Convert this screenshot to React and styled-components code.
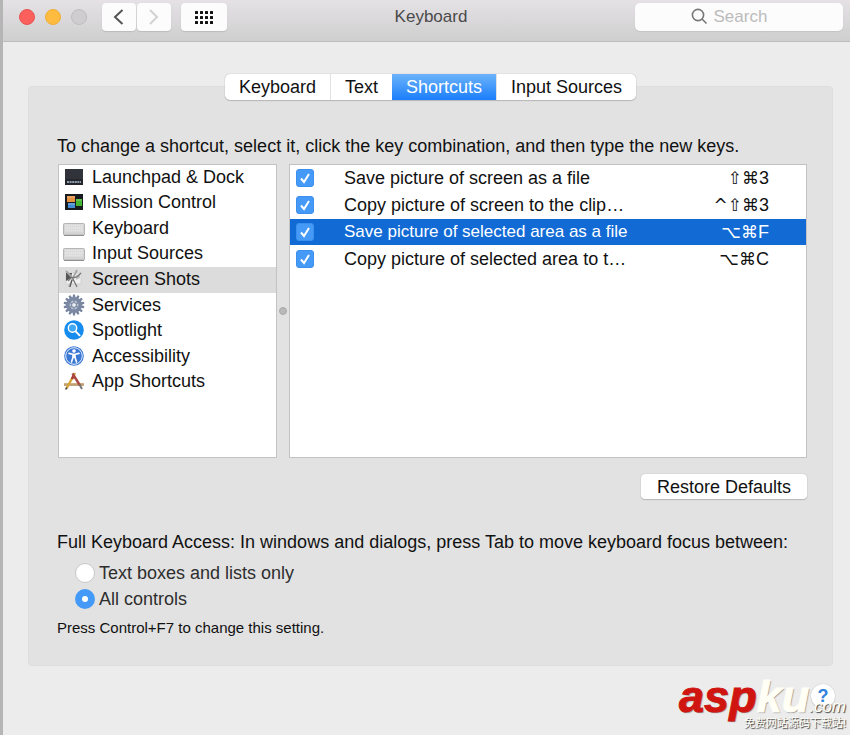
import React, { useState } from 'react'
import styled, { createGlobalStyle } from 'styled-components'

const categories = [
    { name: 'Launchpad & Dock', icon: <DockIcon /> },
    { name: 'Mission Control', icon: <MissionIcon /> },
    { name: 'Keyboard', icon: <KeyboardIcon /> },
    { name: 'Input Sources', icon: <KeyboardIcon /> },
    { name: 'Screen Shots', icon: <ScreenShotIcon /> },
    { name: 'Services', icon: <GearIcon /> },
    { name: 'Spotlight', icon: <SpotlightIcon /> },
    { name: 'Accessibility', icon: <AccessibilityIcon /> },
    { name: 'App Shortcuts', icon: <AppsIcon /> },
]

const shortcuts = [
    { name: 'Save picture of screen as a file', keys: ['shift', 'cmd', '3'] },
    { name: 'Copy picture of screen to the clip…', keys: ['ctrl', 'shift', 'cmd', '3'] },
    { name: 'Save picture of selected area as a file', keys: ['option', 'cmd', 'F'] },
    { name: 'Copy picture of selected area to t…', keys: ['option', 'cmd', 'C'] },
]

const symbols = { shift: '⇧', cmd: '⌘', ctrl: '^', option: '⌥' }

const tabs = ['Keyboard', 'Text', 'Shortcuts', 'Input Sources']

function App() {
    const [tab, setTab] = useState('Shortcuts')
    const [category, setCategory] = useState('Screen Shots')
    const [selected, setSelected] = useState(2)
    const [access, setAccess] = useState('all')

    return (
        <Window>
            <GlobalStyle />
            <Toolbar>
                <ToolbarLeft>
                    <Lights>
                        <Light type="button" aria-label="Close" $color="#fc605c" $edge="#e8534f" />
                        <Light type="button" aria-label="Minimize" $color="#fdbc40" $edge="#efad35" />
                        <Light type="button" aria-label="Zoom" $color="#cfcdcf" $edge="#bebcbe" />
                    </Lights>
                    <NavButtons>
                        <NavButton type="button" aria-label="Back">
                            <svg width="12" height="18" viewBox="0 0 12 18" fill="none" stroke="#555" strokeWidth="2">
                                <path d="M9.500 2 L2 9 L9.500 16" />
                            </svg>
                        </NavButton>
                        <NavButton type="button" aria-label="Forward" disabled>
                            <svg width="12" height="18" viewBox="0 0 12 18" fill="none" stroke="#d2d2d2" strokeWidth="2">
                                <path d="M2 2 L9 9 L2 16" />
                            </svg>
                        </NavButton>
                    </NavButtons>
                    <GridButton type="button" aria-label="Show All">
                        <svg width="19" height="14" viewBox="0 0 19 14" fill="#111">
                            {[0, 5, 10, 15].map((x) =>
                                [0, 5, 10].map((y) => <rect key={`${x}-${y}`} x={x} y={y + 1} width="3" height="3" rx="0.5" />)
                            )}
                        </svg>
                    </GridButton>
                </ToolbarLeft>
                <Title>Keyboard</Title>
                <SearchBox>
                    <svg width="17" height="17" viewBox="0 0 17 17" fill="none" stroke="#777" strokeWidth="1.6">
                        <circle cx="7" cy="7" r="5.6" />
                        <path d="M11 11 L15.5 15.5" />
                    </svg>
                    <SearchInput type="search" placeholder="Search" aria-label="Search" />
                </SearchBox>
            </Toolbar>

            <Content>
                <Tabs>
                    {tabs.map((t) => (
                        <Tab key={t} type="button" $active={t === tab} onClick={() => setTab(t)}>{t}</Tab>
                    ))}
                </Tabs>
                <Panel>
                    <Message>To change a shortcut, select it, click the key combination, and then type the new keys.</Message>
                    <Lists>
                        <CategoryPane>
                            <CategoryList>
                                {categories.map((c) => (
                                    <CategoryItem key={c.name}>
                                        <CategoryButton
                                            type="button"
                                            $active={c.name === category}
                                            onClick={() => setCategory(c.name)}
                                        >
                                            {c.icon}
                                            {c.name}
                                        </CategoryButton>
                                    </CategoryItem>
                                ))}
                            </CategoryList>
                        </CategoryPane>
                        <Splitter><SplitterDot /></Splitter>
                        <ShortcutPane>
                            <ShortcutTable>
                                <tbody>
                                    {shortcuts.map((s, i) => (
                                        <ShortcutRow key={s.name} $active={i === selected} onClick={() => setSelected(i)}>
                                            <CheckCell>
                                                <CheckWrap>
                                                    <Checkbox type="checkbox" id={`shortcut-${i}`} defaultChecked />
                                                    <Tick viewBox="0 0 18 18">
                                                        <path d="M5 9.5 L8 13 L13 5" />
                                                    </Tick>
                                                </CheckWrap>
                                            </CheckCell>
                                            <NameCell $active={i === selected}>
                                                <label htmlFor={`shortcut-${i}`}>{s.name}</label>
                                            </NameCell>
                                            <KeysCell>
                                                <Keys>
                                                    {s.keys.map((k) => (
                                                        symbols[k] ? <KeySymbol key={k}>{symbols[k]}</KeySymbol> : <span key={k}>{k}</span>
                                                    ))}
                                                </Keys>
                                            </KeysCell>
                                        </ShortcutRow>
                                    ))}
                                </tbody>
                            </ShortcutTable>
                        </ShortcutPane>
                    </Lists>
                    <PushButton type="button">Restore Defaults</PushButton>
                    <Access>
                        <Legend>Full Keyboard Access: In windows and dialogs, press Tab to move keyboard focus between:</Legend>
                        <RadioLabel>
                            <Radio type="radio" name="access" checked={access === 'text'} onChange={() => setAccess('text')} />
                            Text boxes and lists only
                        </RadioLabel>
                        <RadioLabel>
                            <Radio type="radio" name="access" checked={access === 'all'} onChange={() => setAccess('all')} />
                            All controls
                        </RadioLabel>
                    </Access>
                    <Hint>Press Control+F7 to change this setting.</Hint>
                </Panel>
            </Content>

            <Footer>
                <HelpButton type="button" aria-label="Help">?</HelpButton>
            </Footer>
            <Watermark>
                <Brand><BrandRed>asp</BrandRed>ku<BrandSmall>.com</BrandSmall></Brand>
                <Slogan>免费网站源码下载站!</Slogan>
            </Watermark>
        </Window>
    )
}

export default App

function DockIcon() {
    return (
        <Icon viewBox="0 0 22 22">
            <rect x="2" y="3" width="18" height="16" fill="#24262b" />
            <rect x="2" y="3" width="18" height="10" fill="#30333a" />
            <path d="M4 16h14" stroke="#8d9db0" strokeWidth="2" strokeDasharray="2 0.6" />
        </Icon>
    )
}

function MissionIcon() {
    return (
        <Icon viewBox="0 0 22 22">
            <rect x="2" y="3" width="18" height="16" fill="#171b20" />
            <rect x="4" y="5" width="8" height="6" fill="#e59243" />
            <rect x="5" y="12" width="7" height="5" fill="#438bd5" />
            <rect x="13" y="8" width="6" height="7" fill="#43b52e" />
            <path d="M4 6h8M5 13h7M13 9h6" stroke="#fff" strokeOpacity="0.35" />
        </Icon>
    )
}

function KeyboardIcon() {
    return (
        <Icon viewBox="0 0 22 22">
            <rect x="0.5" y="6.5" width="21" height="11.5" rx="1" fill="#d4d4d4" stroke="#b5b5b5" />
            <path d="M2 8.5h18M2 11h18M2 13.5h18" stroke="#e4e4e4" strokeWidth="1.8" strokeDasharray="1.7 0.3" />
            <path d="M1 18.5h20" stroke="#8f8f8f" />
        </Icon>
    )
}

function ScreenShotIcon() {
    return (
        <Icon viewBox="0 0 22 22">
            <rect x="3" y="5" width="15" height="11" fill="#f1f1f1" stroke="#d0d0d0" />
            <path d="M3 5h6l-1 5-5 3z" fill="#555" />
            <path d="M13 7l4-1v4l-4 2z" fill="#c4c4c4" />
            <path d="M3 3l6 6M14 2l-4 8-4 9" fill="none" stroke="#a5a5a5" strokeWidth="1.8" />
            <path d="M9 10l5-1 4-4M10 11l4 8M9 9l-4 4" fill="none" stroke="#777" strokeWidth="1.3" />
            <path d="M9 12l-2 7" stroke="#4a4a4a" />
        </Icon>
    )
}

function GearIcon() {
    const teeth = Array.from({ length: 14 }, (_, i) => i * (360 / 14))
    return (
        <Icon viewBox="0 0 22 22">
            {teeth.map((a) => (
                <path key={a} d="M9.5 4 L10 0.6 H12 L12.5 4 Z" fill="#7684a0" transform={`rotate(${a} 11 11)`} />
            ))}
            <circle cx="11" cy="11" r="6.2" fill="#b9c3d1" stroke="#7a88a3" strokeWidth="3.4" />
            <path d="M11 6v10M6.700 8.500l8.600 5M6.700 13.500l8.600-5" stroke="#7a88a3" strokeWidth="1.2" />
            <circle cx="11" cy="11" r="2.4" fill="#eef1f5" stroke="#75849c" />
        </Icon>
    )
}

function SpotlightIcon() {
    return (
        <Icon viewBox="0 0 22 22">
            <circle cx="11" cy="11" r="9.8" fill="#168dee" />
            <circle cx="9.5" cy="9" r="4.2" fill="#40a7f5" stroke="#fff" strokeWidth="1.4" />
            <path d="M12.6 12.3l4 4" stroke="#fff" strokeWidth="1.9" strokeLinecap="round" />
        </Icon>
    )
}

function AccessibilityIcon() {
    return (
        <Icon viewBox="0 0 22 22">
            <circle cx="11" cy="11" r="9.8" fill="#3a78d4" />
            <circle cx="11" cy="11" r="8.3" fill="none" stroke="#e4eefb" strokeWidth="1" />
            <circle cx="11" cy="6" r="1.8" fill="#fff" />
            <path d="M6 8.4l4 .9v3L8.5 17M16 8.4l-4 .9v3l1.5 4.7" fill="none" stroke="#fff" strokeWidth="1.6" strokeLinecap="round" />
            <path d="M9.8 8.8h2.4v4h-2.4z" fill="#fff" />
        </Icon>
    )
}

function AppsIcon() {
    return (
        <Icon viewBox="0 0 22 22">
            <path d="M1 14.5h20" stroke="#a98050" strokeWidth="2.4" />
            <path d="M1 14h20" stroke="#dbbd8c" />
            <path d="M12 3L3.5 18.5" stroke="#d6a338" strokeWidth="2.4" />
            <path d="M11 5L9 9" stroke="#a63b32" strokeWidth="2.6" />
            <path d="M9.5 3.5l7.5 12" stroke="#a94b42" strokeWidth="2.4" />
            <path d="M16.5 14.5l2.5 4.5" stroke="#777" strokeWidth="2" />
            <path d="M4 17.5l-1.5 2" stroke="#555" strokeWidth="1.5" />
        </Icon>
    )
}

const GlobalStyle = createGlobalStyle`
    * {
        box-sizing: border-box;
    }
    body {
        margin: 0;
        background: #ececec;
        color: #111;
        font-family: "Liberation Sans", "Noto Sans CJK SC", sans-serif;
        font-size: 18px;
        line-height: 22px;
    }
    button, input {
        font: inherit;
        color: inherit;
    }
    button {
        border: 0;
        padding: 0;
    }
`

const Window = styled.div`
    position: relative;
    min-height: 100vh;
    border-left: 3px solid #b5b5b5;
    background: #ececec;
`

const Toolbar = styled.header`
    display: grid;
    grid-template-columns: 1fr auto 1fr;
    align-items: center;
    height: 42px;
    padding: 0 7px 8px 16px;
    background: linear-gradient(#e5e1e5, #cfcfcf);
    border-bottom: 1px solid #bdbdbd;
`

const ToolbarLeft = styled.div`
    display: flex;
    align-items: center;
`

const Lights = styled.div`
    display: flex;
    gap: 10px;
    margin-right: 15px;
`

const Light = styled.button`
    width: 16px;
    height: 16px;
    border-radius: 50%;
    background: ${(props) => props.$color};
    border: 1px solid ${(props) => props.$edge};
`

const NavButtons = styled.div`
    display: flex;
    gap: 1px;
    margin-right: 10px;
`

const NavButton = styled.button`
    display: grid;
    place-items: center;
    width: 34px;
    height: 28px;
    border-radius: 4px;
    background: #fcfcfc;
    box-shadow: 0 1px 1px #bbb;
`

const GridButton = styled(NavButton)`
    width: 46px;
`

const Title = styled.h1`
    margin: 0;
    font-size: 17px;
    font-weight: normal;
    color: #4a4a4a;
`

const SearchBox = styled.label`
    justify-self: end;
    display: flex;
    align-items: center;
    justify-content: center;
    gap: 6px;
    width: 208px;
    height: 28px;
    border-radius: 5px;
    background: #fcfcfc;
    box-shadow: 0 1px 1px #c4c4c4;
`

const SearchInput = styled.input`
    width: 74px;
    padding: 0;
    border: 0;
    outline: 0;
    background: transparent;
    appearance: none;
    font-size: 17px;
    &::placeholder {
        color: #bbb;
    }
`

const Content = styled.main`
    padding: 32px 17px 0 25px;
`

const Tabs = styled.div`
    position: relative;
    display: flex;
    width: fit-content;
    height: 26px;
    margin: 0 auto -14px;
    border-radius: 5px;
    background: #fff;
    box-shadow: 0 0 1px #999, 0 1px 1px #bbb;
`

const Tab = styled.button`
    padding: 0 14px;
    color: ${(props) => (props.$active ? '#fff' : '#111')};
    background: ${(props) => (props.$active ? 'linear-gradient(#6cb3fa, #1a7efb)' : 'transparent')};
    &:not(:first-child) {
        border-left: ${(props) => (props.$active ? '0' : '1px solid #e2e2e2')};
    }
`

const Panel = styled.section`
    display: flex;
    flex-direction: column;
    padding: 48px 25px 26px 28px;
    border: 1px solid #dedede;
    border-radius: 4px;
    background: #e2e2e2;
`

const Message = styled.p`
    margin: 0 0 7px;
    white-space: nowrap;
`

const Lists = styled.div`
    display: flex;
    height: 294px;
    margin-left: 1px;
`

const Pane = styled.div`
    border: 1px solid #c3c3c3;
    background: #fff;
`

const CategoryPane = styled(Pane)`
    flex: 0 0 219px;
`

const CategoryList = styled.ul`
    display: grid;
    grid-auto-rows: 1fr;
    height: 230px;
    margin: 0;
    padding: 0;
    list-style: none;
`

const CategoryItem = styled.li`
    display: flex;
`

const CategoryButton = styled.button`
    display: flex;
    flex: 1;
    align-items: center;
    gap: 7px;
    padding: 0 0 2px 4px;
    background: ${(props) => (props.$active ? '#dcdcdc' : 'transparent')};
`

const Icon = styled.svg`
    width: 22px;
    height: 22px;
`

const Splitter = styled.div`
    display: grid;
    flex: 0 0 12px;
    place-items: center;
`

const SplitterDot = styled.span`
    width: 8px;
    height: 8px;
    border-radius: 50%;
    background: #b9b9b9;
    border: 1px solid #a9a9a9;
`

const ShortcutPane = styled(Pane)`
    flex: 1;
`

const ShortcutTable = styled.table`
    width: 100%;
    border-spacing: 0;
    td {
        height: 27px;
        padding: 0;
        border-bottom: 1px solid transparent;
        background-clip: padding-box;
        white-space: nowrap;
    }
`

const ShortcutRow = styled.tr`
    color: ${(props) => (props.$active ? '#fff' : '#111')};
    td {
        background-color: ${(props) => (props.$active ? '#126bd5' : '#fff')};
    }
`

const CheckCell = styled.td`
    width: 54px;
`

const CheckWrap = styled.span`
    position: relative;
    display: block;
    width: 18px;
    height: 18px;
    margin-left: 6px;
`

const Checkbox = styled.input`
    appearance: none;
    display: block;
    width: 18px;
    height: 18px;
    margin: 0;
    border: 1px solid #c4c4c4;
    border-radius: 3px;
    background: #fff;
    &:checked {
        border-color: #3b8fee;
        background: #459af7;
    }
`

const Tick = styled.svg`
    position: absolute;
    inset: 0;
    fill: none;
    stroke: #fff;
    stroke-width: 2;
    pointer-events: none;
`

const NameCell = styled.td`
    font-size: ${(props) => (props.$active ? '17px' : '18px')};
`

const KeysCell = styled.td`
    width: 120px;
`

const Keys = styled.span`
    display: flex;
    justify-content: flex-end;
    padding-right: 37px;
`

const KeySymbol = styled.span`
    font-family: "DejaVu Sans", sans-serif;
    font-size: 17px;
`

const PushButton = styled.button`
    align-self: flex-end;
    height: 25px;
    margin-top: 16px;
    padding: 0 16px;
    border-radius: 4px;
    background: #fff;
    box-shadow: 0 0 1px #999, 0 1px 1px #bbb;
`

const Access = styled.fieldset`
    display: flex;
    flex-direction: column;
    gap: 4px;
    margin: 32px 0 0;
    padding: 0;
    border: 0;
`

const Legend = styled.legend`
    padding: 0;
    margin-bottom: 9px;
    white-space: nowrap;
`

const RadioLabel = styled.label`
    display: flex;
    align-items: center;
    gap: 4px;
    padding-left: 18px;
    color: #2e2e2e;
`

const Radio = styled.input`
    appearance: none;
    width: 20px;
    height: 20px;
    margin: 0;
    border: 1px solid #c8c8c8;
    border-radius: 50%;
    background: #fff;
    &:checked {
        border: 7px solid #459af7;
    }
`

const Hint = styled.p`
    margin: 7px 0 0;
    font-size: 15px;
`

const Footer = styled.footer`
    display: flex;
    justify-content: flex-end;
    padding: 18px 15px 0 0;
`

const HelpButton = styled.button`
    width: 24px;
    height: 24px;
    border-radius: 50%;
    background: #fff;
    box-shadow: 0 0 1px #aaa, 0 1px 1px #ccc;
    color: #2f83dd;
    font-size: 18px;
    font-weight: bold;
`

const Watermark = styled.div`
    position: absolute;
    right: 4px;
    bottom: 4px;
    display: flex;
    flex-direction: column;
    align-items: flex-end;
    color: #fffff6;
    pointer-events: none;
`

const Brand = styled.div`
    font-size: 45px;
    line-height: 40px;
    font-weight: bold;
    font-style: italic;
    text-shadow: 1px 1px 1px #888;
    -webkit-text-stroke: 1px currentColor;
`

const BrandRed = styled.span`
    color: #d01510;
`

const BrandSmall = styled.span`
    font-size: 17px;
    font-weight: normal;
    text-shadow: 1px 1px 1px #444;
    -webkit-text-stroke: 0;
`

const Slogan = styled.div`
    margin-top: -12px;
    font-size: 11px;
    line-height: 16px;
    text-shadow: 1px 1px 1px #333;
`
